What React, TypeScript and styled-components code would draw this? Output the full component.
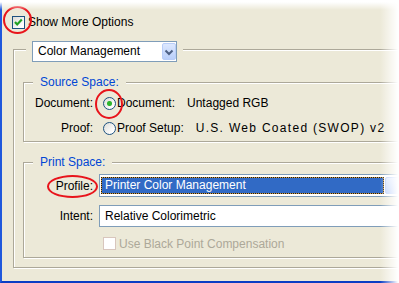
import styled, { createGlobalStyle } from "styled-components"

const GlobalStyle = createGlobalStyle`
    html, body {
        margin: 0;
        padding: 0;
        background: #fff;
        overflow: hidden;
    }
    body {
        font-family: "Liberation Sans", Arial, sans-serif;
        font-size: 12px;
        color: #000;
    }
`

const Screen = styled.div`
    position: relative;
    width: 399px;
    height: 283px;
    overflow: hidden;
`

const Window = styled.div`
    height: 100%;
    box-sizing: border-box;
    background: #ece9d8;
    border-left: 2px solid #2058dc;
    border-bottom: 2px solid #0a3dc4;
    padding: 16px 0 0 10px;
    display: flex;
    flex-direction: column;
`

const FadeTop = styled.div`
    position: absolute;
    left: 0;
    right: 0;
    top: 0;
    height: 10px;
    background: linear-gradient(#fff 20%, rgba(255, 255, 255, 0));
    pointer-events: none;
`

const FadeRight = styled.div`
    position: absolute;
    top: 0;
    bottom: 0;
    right: 0;
    width: 19px;
    background: linear-gradient(to right, rgba(255, 255, 255, 0), #fff 95%);
    pointer-events: none;
`

const TopRow = styled.div`
    display: flex;
    align-items: center;
    gap: 3px;
    height: 13px;
    line-height: 13px;
`

const Marked = styled.span<{ $ml?: number }>`
    position: relative;
    display: inline-flex;
    margin-left: ${p => p.$ml ?? 0}px;
`

const Ring = styled.span<{ $x: number; $y: number; $w: number; $h: number }>`
    position: absolute;
    left: ${p => p.$x}px;
    top: ${p => p.$y}px;
    width: ${p => p.$w}px;
    height: ${p => p.$h}px;
    box-sizing: border-box;
    border: 2px solid #e8141b;
    border-radius: 50%;
    pointer-events: none;
`

const CheckBox = styled.span<{ $disabled?: boolean }>`
    width: 13px;
    height: 13px;
    box-sizing: border-box;
    display: flex;
    border: 1px solid ${p => p.$disabled ? "#d8c6bd" : "#1c5180"};
    background: ${p => p.$disabled ? "#fff" : "linear-gradient(135deg, #dcdcd7, #fff 80%)"};
`

const RadioDot = styled.span<{ $checked?: boolean }>`
    width: 13px;
    height: 13px;
    box-sizing: border-box;
    border-radius: 50%;
    border: 1px solid #1c5180;
    background: ${p => p.$checked
        ? "radial-gradient(circle at 50% 50%, #2fb52f 0 2px, #7fcf7f 2.6px, transparent 3px), linear-gradient(135deg, #dcdcd7, #fff 80%)"
        : "linear-gradient(135deg, #dcdcd7, #fff 80%)"};
`

const OuterGroup = styled.div`
    margin: 20px 0 0 1px;
    width: 520px;
    padding: 0 9px 9px;
    border: 1px solid #aca899;
    box-shadow: inset 1px 1px 0 #fff, 1px 1px 0 #fff;
    display: flex;
    flex-direction: column;
`

const Group = styled.div<{ $top: number }>`
    margin-top: ${p => p.$top}px;
    border: 1px solid #aca899;
    box-shadow: inset 1px 1px 0 #fff, 1px 1px 0 #fff;
    display: flex;
    flex-direction: column;
`

const Legend = styled.div<{ $lift: number; $indent: number; $pad: number }>`
    align-self: flex-start;
    margin: -${p => p.$lift}px 0 0 ${p => p.$indent}px;
    padding: 0 ${p => p.$pad}px 0 ${p => p.$pad}px;
    background: #ece9d8;
    color: #0046d5;
    line-height: 14px;
`

const Body = styled.div<{ $top: number; $bottom: number }>`
    padding: ${p => p.$top}px 0 ${p => p.$bottom}px;
    display: flex;
    flex-direction: column;
`

const Row = styled.div<{ $h: number; $mt?: number }>`
    display: flex;
    align-items: center;
    height: ${p => p.$h}px;
    margin-top: ${p => p.$mt ?? 0}px;
    line-height: 14px;
`

const Label = styled.span`
    width: 69px;
    flex-shrink: 0;
    text-align: right;
`

const Choice = styled.span<{ $muted?: boolean }>`
    display: flex;
    gap: 12px;
    margin-left: ${p => p.$muted ? 3 : 1}px;
    white-space: nowrap;
    color: ${p => p.$muted ? "#aca899" : "#000"};
`

const Value = styled.span<{ $spread?: number }>`
    letter-spacing: ${p => p.$spread ?? 0}px;
`

const Combo = styled.div`
    display: flex;
    width: 145px;
    height: 21px;
    box-sizing: border-box;
    border: 1px solid #7f9db9;
    background: #fff;
    padding: 1px 0 1px 1px;
    color: #000;
`

const ComboText = styled.span`
    flex: 1;
    padding-left: 4px;
    line-height: 17px;
    white-space: nowrap;
`

const DropButton = styled.span<{ $w?: number }>`
    width: ${p => p.$w ?? 14}px;
    flex-shrink: 0;
    box-sizing: border-box;
    border: 1px solid #b8cdf8;
    border-radius: 2px;
    background: linear-gradient(#dde8fe, #b9cffa);
    display: flex;
    align-items: center;
    justify-content: center;
`

const SelectBox = styled.div<{ $h: number; $pad: number; $w: number }>`
    margin-left: 6px;
    display: flex;
    width: ${p => p.$w}px;
    height: ${p => p.$h}px;
    flex-shrink: 0;
    box-sizing: border-box;
    border: 1px solid #7f9db9;
    background: #fff;
    padding: ${p => p.$pad}px 1px;
    gap: 1px;
`

const Selected = styled.span`
    flex: 1;
    box-sizing: border-box;
    border: 1px dotted #1a1a1a;
    background: linear-gradient(#316ac5, #316ac5) padding-box, #cf9a45 border-box;
    color: #fff;
    padding-left: 3px;
    line-height: 15px;
    white-space: nowrap;
`

const Plain = styled.span`
    flex: 1;
    padding-left: 4px;
    line-height: 18px;
    white-space: nowrap;
`

function Chevron() {
    return (
        <svg width="12" height="12" viewBox="0 0 12 12">
            <path d="M2.5 4.5 L6 8 L9.5 4.5" fill="none" stroke="#4d6185" strokeWidth="2" />
        </svg>
    )
}

function CheckMark() {
    return (
        <svg width="11" height="11" viewBox="0 0 11 11">
            <path d="M2 5 L4.2 7.4 L8.8 2.6" fill="none" stroke="#21a121" strokeWidth="2.2" />
        </svg>
    )
}

export default function App() {
    return (
        <>
            <GlobalStyle />
            <Screen>
                <Window>
                    <TopRow>
                        <Marked>
                            <CheckBox><CheckMark /></CheckBox>
                            <Ring $x={-9} $y={-10} $w={29} $h={28} />
                        </Marked>
                        <span>Show More Options</span>
                    </TopRow>

                    <OuterGroup>
                        <Legend $lift={9} $indent={3} $pad={6}>
                            <Combo>
                                <ComboText>Color Management</ComboText>
                                <DropButton><Chevron /></DropButton>
                            </Combo>
                        </Legend>

                        <Group $top={20}>
                            <Legend $lift={8} $indent={9} $pad={7}>Source Space:</Legend>
                            <Body $top={6} $bottom={5}>
                                <Row $h={16}>
                                    <Label>Document:</Label>
                                    <Marked $ml={10}>
                                        <RadioDot $checked />
                                        <Ring $x={-8} $y={-8} $w={28} $h={30} />
                                    </Marked>
                                    <Choice>
                                        <span>Document:</span>
                                        <Value>Untagged RGB</Value>
                                    </Choice>
                                </Row>
                                <Row $h={16} $mt={9}>
                                    <Label>Proof:</Label>
                                    <Marked $ml={10}>
                                        <RadioDot />
                                    </Marked>
                                    <Choice>
                                        <span>Proof Setup:</span>
                                        <Value $spread={1.3}>U.S. Web Coated (SWOP) v2</Value>
                                    </Choice>
                                </Row>
                            </Body>
                        </Group>

                        <Group $top={20}>
                            <Legend $lift={8} $indent={9} $pad={7}>Print Space:</Legend>
                            <Body $top={5} $bottom={7}>
                                <Row $h={23}>
                                    <Label>
                                        <Marked>
                                            Profile:
                                            <Ring $x={-9} $y={-4} $w={51} $h={23} />
                                        </Marked>
                                    </Label>
                                    <SelectBox $h={23} $pad={2} $w={305}>
                                        <Selected>Printer Color Management</Selected>
                                        <DropButton $w={17} />
                                    </SelectBox>
                                </Row>
                                <Row $h={22} $mt={8}>
                                    <Label>Intent:</Label>
                                    <SelectBox $h={22} $pad={1} $w={330}>
                                        <Plain>Relative Colorimetric</Plain>
                                        <DropButton $w={17} />
                                    </SelectBox>
                                </Row>
                                <Row $h={13} $mt={10}>
                                    <Label />
                                    <Marked $ml={10}>
                                        <CheckBox $disabled />
                                    </Marked>
                                    <Choice $muted>Use Black Point Compensation</Choice>
                                </Row>
                            </Body>
                        </Group>
                    </OuterGroup>
                </Window>
                <FadeTop />
                <FadeRight />
            </Screen>
        </>
    )
}
